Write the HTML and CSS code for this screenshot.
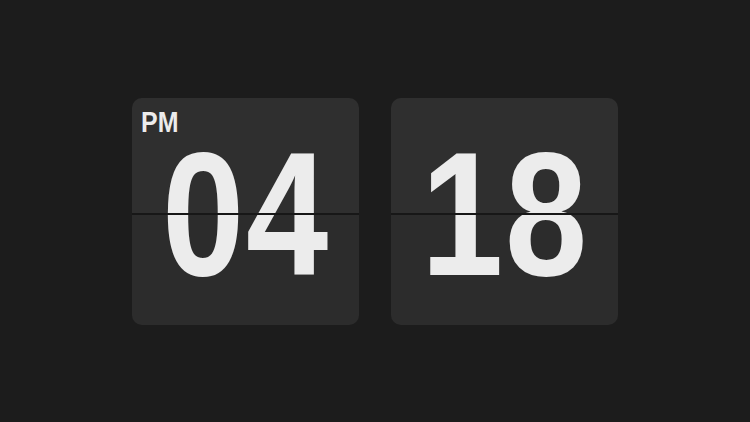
FILE: index.html
```html
<!DOCTYPE html>
<html>
<head>
<meta charset="utf-8">
<link rel="stylesheet" href="styles.css">
</head>
<body>
<main class="clock">
  <div class="card">
    <span class="ampm">PM</span>
    <span class="digits">04</span>
  </div>
  <div class="card">
    <span class="digits">18</span>
  </div>
</main>
</body>
</html>
```
FILE: styles.css
```css
html, body {
  margin: 0;
  padding: 0;
  height: 100%;
  background: #1c1c1c;
}
body {
  display: flex;
  align-items: center;
  justify-content: center;
  font-family: "Liberation Sans", Arial, sans-serif;
}
.clock {
  display: flex;
  gap: 32px;
}
.card {
  position: relative;
  width: 227px;
  height: 227px;
  border-radius: 10px;
  background: linear-gradient(#2f2f2f 0, #2f2f2f 116px, #2c2c2c 116px, #2c2c2c 100%);
  display: flex;
  align-items: center;
  justify-content: center;
  box-sizing: border-box;
  padding-top: 6px;
  overflow: hidden;
}
.card::after {
  content: "";
  position: absolute;
  left: 0;
  right: 0;
  top: 115px;
  height: 2px;
  background: #171717;
}
.digits {
  display: block;
  color: #ececec;
  font-weight: bold;
  font-size: 176px;
  line-height: 128px;
  letter-spacing: 2px;
  transform: scaleX(0.84);
}
.ampm {
  position: absolute;
  left: 9px;
  top: 10px;
  color: #ececec;
  font-weight: bold;
  font-size: 29px;
  line-height: 1;
  transform: scaleX(0.86);
  transform-origin: left center;
}
```
